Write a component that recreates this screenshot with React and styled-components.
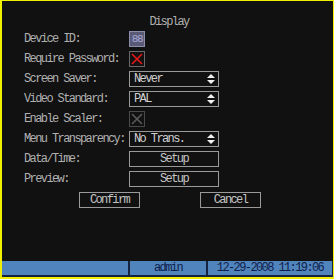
import styled, { createGlobalStyle } from "styled-components";

const Global = createGlobalStyle`
    body {
        margin: 0;
        background: #101010;
    }
`

const Screen = styled.div`
    width: 334px;
    height: 279px;
    box-sizing: border-box;
    border-style: solid;
    border-color: #f0f000;
    border-width: 1px 1px 2px 2px;
    background: #111111;
    display: flex;
    flex-direction: column;
    font-family: "Liberation Mono", "DejaVu Sans Mono", monospace;
    font-size: 12px;
    letter-spacing: -1.6px;
    color: #b0b0b0;
`

const Main = styled.div`
    flex: 1;
    display: flex;
    flex-direction: column;
    padding: 15px 0 0 22px;
`

const Title = styled.div`
    width: 290px;
    text-align: center;
    line-height: 13px;
    margin-bottom: 2px;
`

const Form = styled.div`
    display: flex;
    flex-direction: column;
    gap: 4px;
`

const Row = styled.div`
    display: flex;
    align-items: center;
    height: 16px;
`

const Label = styled.div`
    width: 105px;
    white-space: nowrap;
`

const Box = styled.div`
    width: 16px;
    height: 16px;
    box-sizing: border-box;
    border: 1px solid ${p => p.$border || "#7a7a7a"};
    background: ${p => p.$fill || "transparent"};
    display: flex;
    align-items: center;
    justify-content: center;
`

const IdText = styled.span`
    color: #a8a8d8;
    font-size: 11px;
    letter-spacing: -1.4px;
`

const Select = styled.div`
    width: 90px;
    height: 16px;
    box-sizing: border-box;
    border: 1px solid #9a9a9a;
    display: flex;
    align-items: center;
    justify-content: space-between;
    padding: 0 3px 0 4px;
    color: #d0d0d0;
`

const Button = styled.div`
    width: ${p => p.$w || 90}px;
    height: 16px;
    box-sizing: border-box;
    border: 1px solid #9a9a9a;
    display: flex;
    align-items: center;
    justify-content: center;
    color: #c4c4c4;
`

const Actions = styled.div`
    display: flex;
    gap: 60px;
    margin: 5px 0 0 55px;
`

const Status = styled.div`
    height: 14px;
    display: flex;
    gap: 2px;
    background: #142440;
    padding-bottom: 2px;
    color: #10204a;
`

const Cell = styled.div`
    width: ${p => p.$w}px;
    background: #4f84bc;
    display: flex;
    align-items: center;
    justify-content: center;
`

const Arrows = () => (
    <svg width="8" height="11" viewBox="0 0 8 11">
        <polygon points="4,0 8,4 0,4" fill="#f0f0f0" />
        <polygon points="0,6 8,6 4,10" fill="#f0f0f0" />
    </svg>
)

const Cross = ({ color }) => (
    <svg width="14" height="14" viewBox="0 0 14 14">
        <line x1="2" y1="2" x2="12" y2="12" stroke={color} strokeWidth="1.6" />
        <line x1="12" y1="2" x2="2" y2="12" stroke={color} strokeWidth="1.6" />
    </svg>
)

const Sel = ({ value }) => (
    <Select>
        <span>{value}</span>
        <Arrows />
    </Select>
)

export default function App() {
    return (
        <>
            <Global />
            <Screen>
                <Main>
                    <Title>Display</Title>
                    <Form>
                        <Row>
                            <Label>Device ID:</Label>
                            <Box $border="#8c8cac" $fill="#5a5a76"><IdText>88</IdText></Box>
                        </Row>
                        <Row>
                            <Label>Require Password:</Label>
                            <Box $border="#6a6a6a"><Cross color="#e81818" /></Box>
                        </Row>
                        <Row>
                            <Label>Screen Saver:</Label>
                            <Sel value="Never" />
                        </Row>
                        <Row>
                            <Label>Video Standard:</Label>
                            <Sel value="PAL" />
                        </Row>
                        <Row>
                            <Label>Enable Scaler:</Label>
                            <Box $border="#4a4a4a"><Cross color="#5a5a5a" /></Box>
                        </Row>
                        <Row>
                            <Label>Menu Transparency:</Label>
                            <Sel value="No Trans." />
                        </Row>
                        <Row>
                            <Label>Data/Time:</Label>
                            <Button>Setup</Button>
                        </Row>
                        <Row>
                            <Label>Preview:</Label>
                            <Button>Setup</Button>
                        </Row>
                    </Form>
                    <Actions>
                        <Button $w={61}>Confirm</Button>
                        <Button $w={61}>Cancel</Button>
                    </Actions>
                </Main>
                <Status>
                    <Cell $w={126} />
                    <Cell $w={76}>admin</Cell>
                    <Cell $w={124}>12-29-2008 11:19:06</Cell>
                </Status>
            </Screen>
        </>
    )
}
